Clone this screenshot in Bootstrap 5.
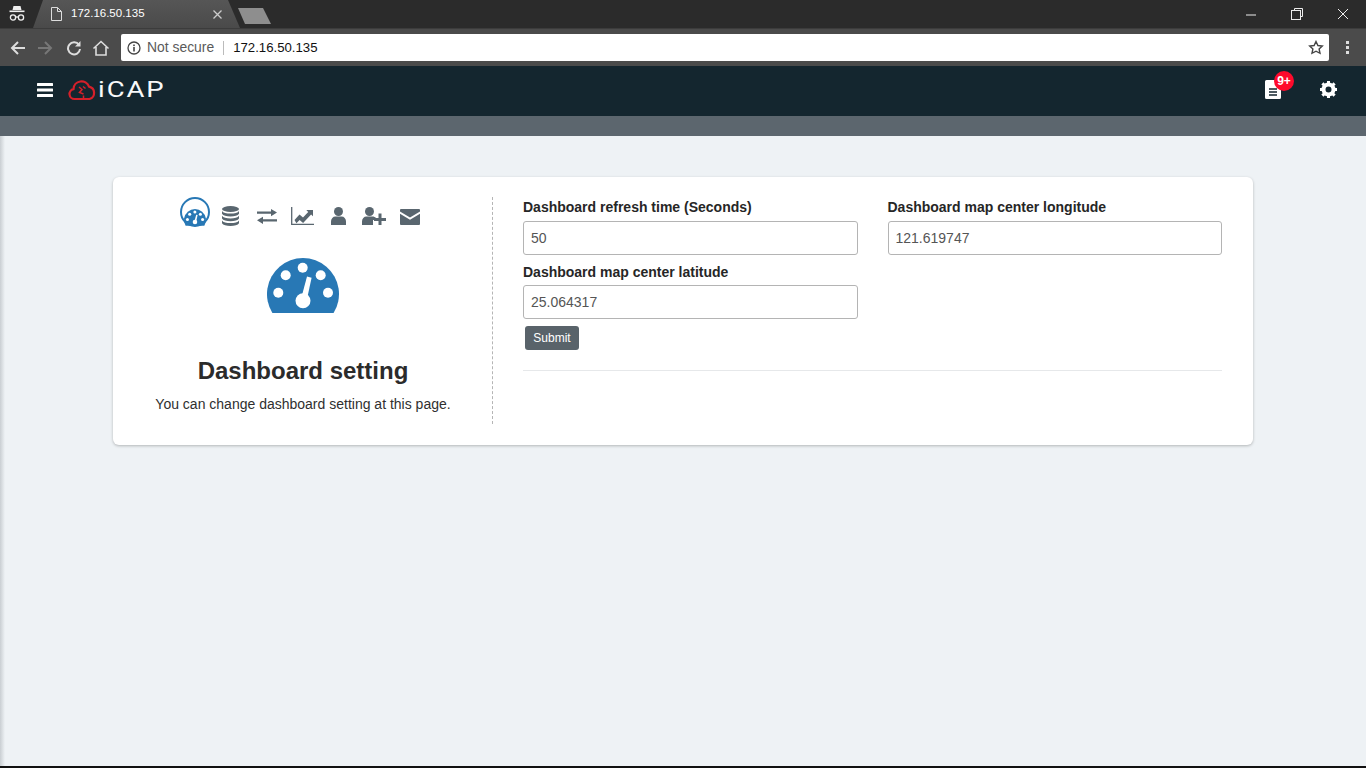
<!DOCTYPE html>
<html lang="en">
<head>
<meta charset="utf-8">
<title>iCAP</title>
<link href="https://cdn.jsdelivr.net/npm/bootstrap@5.3.0/dist/css/bootstrap.min.css" rel="stylesheet">
<style>
html,body{height:100%}
body{background:#eef2f5;font-family:"Liberation Sans",Arial,sans-serif;font-size:14px;color:#212529;overflow:hidden}
.shell{height:768px;border-bottom:2px solid #111;box-sizing:border-box}
.tabstrip{height:28px;background:#2b2b2b}
.incog{width:33px;justify-content:center;flex:none}
.tabshape{width:207px;height:28px;flex:none;background:linear-gradient(#565656,#4a4a4a);clip-path:polygon(10px 0,195px 0,207px 28px,0 28px);color:#fff;font-size:11.5px;padding-left:18px}
.tabfile{margin-right:9px}
.tabclose{margin-left:auto;margin-right:18px;display:block}
.newtab{width:33px;height:16px;background:#8e8e8e;clip-path:polygon(0 0,25px 0,33px 16px,7px 16px);margin:8px 0 0 -2px}
.winbtns{margin-left:auto}
.winbtn{width:46px;height:28px;justify-content:center}
.toolbar{height:38px;background:#4b4b4b;border-top:1px solid #3c3c3c}
.navtools{width:121px;padding-left:9px;flex:none}
.navtools svg{display:block}
.nav-fwd{margin-left:9px}
.nav-rel{margin-left:11px}
.nav-home{margin-left:9px}
.omnibox{width:1208px;height:27px;background:#fff;border-radius:2px;font-size:13.2px;padding-left:6px;color:#111;flex:none}
.notsecure{color:#5a5a5a;margin-left:6px;font-size:13.9px}
.omnisep{width:1px;height:14px;background:#bbb;margin:0 9px}
.omnistar{margin-left:auto;margin-right:5px}
.menudots{margin-left:17px}
.appbar{height:50px;background:#14262f;padding:0 0 3px 37px}
.cloudmark{margin-left:15px}
.logotext{display:inline-block;color:#f8f9fa;font-family:Roboto,"Liberation Sans",sans-serif;font-size:22.5px;font-weight:400;letter-spacing:1.6px;line-height:1;margin-left:2px;transform:scaleX(1.22);transform-origin:left center}
.barright{margin-left:auto;padding-right:29px}
.docicon{position:relative;margin-right:39px;display:block}
.countbadge{position:absolute;left:9px;top:-9px;width:20px;height:20px;border-radius:50%;background:#ff0a2c;color:#fff;font-size:12px;font-weight:700;line-height:20px;text-align:center}
.subbar{height:20px;background:#5c666e}
.pagebody{height:630px;padding:41px 113px 0;background:linear-gradient(90deg,#c9ced2,#eef2f5 5px)}
.panel{height:268px;background:#fff;border-radius:6px;box-shadow:0 1px 3px rgba(0,0,0,.25);padding:20px 31px 21px 0}
.leftpane{width:380px;height:227px;border-right:1px dashed #b5b5b5;flex:none;padding-left:1px}
.tabicons{height:31px;padding-left:66px;align-items:flex-start}
.ic-db{margin:9px 0 0 12px}
.ic-arrows{margin:12px 0 0 18px}
.ic-chart{margin:10px 0 0 14px}
.ic-user{margin:10px 0 0 17px}
.ic-useradd{margin:10px 0 0 16px}
.ic-mail{margin:12px 0 0 14px}
.bigdial{margin-top:30px;display:block}
.paneltitle{font-size:24px;font-weight:700;color:#2b2b2b;margin:43px 0 0;line-height:30px}
.paneltext{margin:9px 0 0;color:#2f2f2f;line-height:18px}
.rightpane{padding-left:30px;flex:1;min-width:0}
.fieldcols{column-gap:30px}
.fieldcol{flex:1 1 0;min-width:0}
.fieldlabel{display:block;font-weight:700;font-size:14px;line-height:20px;margin-bottom:4px;color:#262626}
.fieldinput{height:34px;border:1px solid #b4b4b4;border-radius:3px;padding:0 7px;font-size:14px;color:#555;box-shadow:none}
.fieldgap{margin-top:7px;margin-bottom:3px}
.submitbtn{margin:7px 0 0 2px;height:24px;width:54px;padding:0;font-size:12px;background:#59636a;border:0;color:#fff;border-radius:3px}
.rule{margin:20px 0 0;border:0;border-top:1px solid #e6e8ea;opacity:1}
</style>
</head>
<body>
<svg width="0" height="0" class="position-absolute" aria-hidden="true"><defs>
  <g id="gauge">
    <path d="M5.400 55A36 36 0 1 1 66.600 55z" fill="#2878b5"/>
    <g fill="#fff"><circle cx="35.700" cy="9.700" r="5"/><circle cx="18.700" cy="17.300" r="5"/><circle cx="53.700" cy="17.300" r="5"/><circle cx="11.300" cy="34.700" r="5"/><circle cx="61" cy="34.700" r="5"/><path d="M40 18.500l4.600 1.200L40 41h-6z"/><circle cx="36" cy="42.700" r="7.500"/></g>
  </g>
</defs></svg>
<div class="shell">
  <div class="tabstrip d-flex">
    <div class="incog d-flex align-items-center">
      <svg width="18" height="18" viewBox="0 0 18 18" fill="#f0f0f0"><path d="M5.500 1h7l1 4h-9z"/><rect x="1.500" y="5.500" width="15" height="1.600"/><g fill="none" stroke="#f0f0f0" stroke-width="1.300"><circle cx="5" cy="12.500" r="2.600"/><circle cx="13" cy="12.500" r="2.600"/><path d="M7.600 12h2.800"/></g></svg>
    </div>
    <div class="tabshape d-flex align-items-center">
      <svg class="tabfile" width="11" height="14" viewBox="0 0 11 14" fill="none" stroke="#ddd" stroke-width="1"><path d="M.5.500h6l4 4v9h-10zM6.500.5v4h4"/></svg>
      <span>172.16.50.135</span>
      <svg class="tabclose" width="9" height="9" viewBox="0 0 9 9"><path d="M.5.500l8 8M8.500.5l-8 8" stroke="#ccc" stroke-width="1.300"/></svg>
    </div>
    <div class="newtab"></div>
    <div class="winbtns d-flex">
      <div class="winbtn d-flex align-items-center"><svg width="12" height="12" viewBox="0 0 12 12"><path d="M1 7h10" stroke="#eee"/></svg></div>
      <div class="winbtn d-flex align-items-center"><svg width="12" height="12" viewBox="0 0 12 12" fill="none" stroke="#eee"><path d="M3.500 2.500V.5h8v8h-2"/><rect x=".5" y="2.500" width="9" height="9"/></svg></div>
      <div class="winbtn d-flex align-items-center"><svg width="12" height="12" viewBox="0 0 12 12"><path d="M1 1l10 10M11 1L1 11" stroke="#eee"/></svg></div>
    </div>
  </div>
  <div class="toolbar d-flex align-items-center">
    <div class="navtools d-flex align-items-center">
      <svg width="18" height="16" viewBox="0 0 18 16" fill="none" stroke="#ddd" stroke-width="2"><path d="M16 8H3M9 2L3 8l6 6"/></svg>
      <svg class="nav-fwd" width="18" height="16" viewBox="0 0 18 16" fill="none" stroke="#777" stroke-width="2"><path d="M2 8h13M9 2l6 6-6 6"/></svg>
      <svg class="nav-rel" width="18" height="16" viewBox="0 0 18 16" fill="none" stroke="#ddd" stroke-width="2"><path d="M14 5a6 6 0 1 0 1 4"/><path d="M15.500 1v5.500H10z" fill="#ddd" stroke="none"/></svg>
      <svg class="nav-home" width="18" height="16" viewBox="0 0 18 16" fill="none" stroke="#ddd" stroke-width="1.600"><path d="M1.500 8.500L9 1.500l7.500 7M4 7v8h10V7"/></svg>
    </div>
    <div class="omnibox d-flex align-items-center">
      <svg width="14" height="14" viewBox="0 0 14 14"><circle cx="7" cy="7" r="6" fill="none" stroke="#444" stroke-width="1.300"/><rect x="6.200" y="6" width="1.600" height="4.500" fill="#444"/><rect x="6.200" y="3.500" width="1.600" height="1.600" fill="#444"/></svg>
      <span class="notsecure">Not secure</span><span class="omnisep"></span><span>172.16.50.135</span>
      <svg class="omnistar" width="16" height="15" viewBox="0 0 16 15" fill="none" stroke="#444" stroke-width="1.400"><path d="M8 1.500l1.900 4 4.400.5-3.200 3 .9 4.300L8 11.200l-4 2.100.9-4.300-3.200-3 4.400-.5z"/></svg>
    </div>
    <div class="menudots d-flex"><svg width="3" height="13" viewBox="0 0 3 13" fill="#ddd"><rect width="3" height="3"/><rect y="5" width="3" height="3"/><rect y="10" width="3" height="3"/></svg></div>
  </div>
  <div class="appbar d-flex align-items-center">
    <svg width="16" height="14" viewBox="0 0 16 14" fill="#fff"><rect width="16" height="3" rx=".5"/><rect y="5.500" width="16" height="3" rx=".5"/><rect y="11" width="16" height="3" rx=".5"/></svg>
    <svg class="cloudmark" width="28" height="22" viewBox="0 0 28 22" fill="none" stroke="#d5202a" stroke-width="2.200"><path d="M6.500 20a5 5 0 0 1-1-9.900 8 8 0 0 1 15.500-2.500 6.400 6.400 0 0 1 .5 12.400z"/><path d="M11 8l3 2.500-2.500 3 4 1.500M15.500 20v-3.500M15 7.500l2.500 2" stroke-width="1.500"/></svg>
    <span class="logotext">iCAP</span>
    <div class="barright d-flex align-items-center">
      <span class="docicon">
        <svg class="d-block" width="16" height="19" viewBox="0 0 16 19"><path d="M0 1.500A1.500 1.500 0 0 1 1.500 0H10l6 6v11.500a1.500 1.500 0 0 1-1.500 1.500h-13A1.500 1.500 0 0 1 0 17.500z" fill="#fff"/><path d="M4 9h8M4 12h8M4 15h8" stroke="#14262f" stroke-width="1.500"/></svg>
        <span class="countbadge">9+</span>
      </span>
      <svg width="17" height="17" viewBox="0 0 17 17"><circle cx="8.500" cy="8.500" r="5" fill="none" stroke="#fff" stroke-width="4"/><g stroke="#fff" stroke-width="3"><path d="M8.500 0v3M8.500 14v3M0 8.500h3M14 8.500h3M2.400 2.400l2.100 2.100M12.500 12.500l2.100 2.100M14.600 2.400l-2.100 2.100M4.500 12.500l-2.100 2.100"/></g></svg>
    </div>
  </div>
  <div class="subbar"></div>
  <div class="pagebody">
    <div class="panel d-flex">
      <div class="leftpane text-center">
        <div class="tabicons d-flex">
          <svg width="30" height="31" viewBox="0 0 30 31"><circle cx="15" cy="15" r="14" fill="none" stroke="#2878b5" stroke-width="2"/><use href="#gauge" transform="translate(4 12) scale(.305)"/></svg>
          <svg class="ic-db" width="17" height="20" viewBox="0 0 17 20" fill="#59666f"><ellipse cx="8.500" cy="3" rx="8.500" ry="3"/><path d="M0 5c1 1.800 4.500 2.600 8.500 2.600S16 6.800 17 5v2.800c-1 1.800-4.500 2.700-8.500 2.700S1 9.600 0 7.800z"/><path d="M0 9.800c1 1.800 4.500 2.600 8.500 2.600s7.500-.8 8.500-2.600v2.800c-1 1.800-4.500 2.700-8.500 2.700S1 14.400 0 12.600z"/><path d="M0 14.500c1 1.800 4.500 2.600 8.500 2.600s7.500-.8 8.500-2.600v2.700c-1 1.800-4.500 2.800-8.500 2.800S1 19 0 17.200z"/></svg>
          <svg class="ic-arrows" width="20" height="15" viewBox="0 0 20 15" fill="#59666f"><path d="M0 2.500h14V0l6 3.600-6 3.700V4.800H0z"/><path d="M20 10.200H6V7.700L0 11.300 6 15v-2.500h14z"/></svg>
          <svg class="ic-chart" width="23" height="18" viewBox="0 0 23 18"><path d="M.7 0v17.300H23" fill="none" stroke="#59666f" stroke-width="1.300"/><path d="M3.500 13l5-5.500 3.500 3 5.200-5.500-1.900-2H22v6.300l-1.900-1.900-8 8.500-3.500-3-3.200 3.400z" fill="#59666f"/></svg>
          <svg class="ic-user" width="15" height="18" viewBox="0 0 15 18" fill="#59666f"><circle cx="7.500" cy="4.500" r="4.500"/><path d="M0 18v-3.500C0 11.500 2 9.500 4.500 9.500h6c2.500 0 4.500 2 4.500 5V18z"/></svg>
          <svg class="ic-useradd" width="24" height="18" viewBox="0 0 24 18" fill="#59666f"><circle cx="7.500" cy="4.500" r="4.500"/><path d="M0 18v-3.500c0-3 2-5 4.500-5h6c1.500 0 2.500.5 3.500 1.500v2H11v5z"/><path d="M16.500 6.500h3v4.500H24v3h-4.500v4h-3v-4H12v-3h4.500z"/></svg>
          <svg class="ic-mail" width="20" height="16" viewBox="0 0 20 16" fill="#59666f"><path d="M0 1a1 1 0 0 1 1-1h18a1 1 0 0 1 1 1v1.500l-10 6-10-6z"/><path d="M0 4.800l10 6 10-6V15a1 1 0 0 1-1 1H1a1 1 0 0 1-1-1z"/></svg>
        </div>
        <svg class="bigdial mx-auto" width="72" height="55" viewBox="0 0 72 55"><use href="#gauge"/></svg>
        <h2 class="paneltitle">Dashboard setting</h2>
        <p class="paneltext">You can change dashboard setting at this page.</p>
      </div>
      <div class="rightpane">
        <div class="d-flex fieldcols">
          <div class="fieldcol">
            <label class="fieldlabel" for="refreshField">Dashboard refresh time (Seconds)</label>
            <input id="refreshField" class="form-control fieldinput" value="50">
            <label class="fieldlabel fieldgap" for="latField">Dashboard map center latitude</label>
            <input id="latField" class="form-control fieldinput" value="25.064317">
            <button type="button" class="btn submitbtn d-block">Submit</button>
          </div>
          <div class="fieldcol">
            <label class="fieldlabel" for="lonField">Dashboard map center longitude</label>
            <input id="lonField" class="form-control fieldinput" value="121.619747">
          </div>
        </div>
        <hr class="rule">
      </div>
    </div>
  </div>
</div>
</body>
</html>
